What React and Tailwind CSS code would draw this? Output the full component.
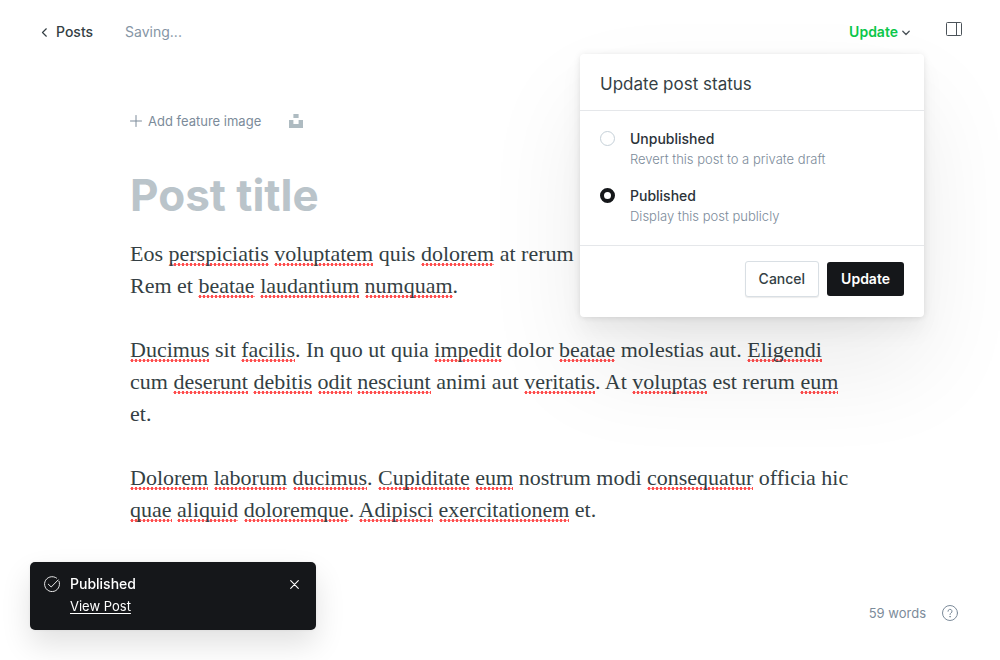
import React from "react";

const paragraphs = [
  ["Eos *perspiciatis *voluptatem quis *dolorem at rerum", "Rem et *beatae *laudantium *numquam."],
  [
    "*Ducimus sit *facilis. In quo ut quia *impedit dolor *beatae molestias aut. *Eligendi cum *deserunt *debitis *odit *nesciunt animi aut *veritatis. At *voluptas est rerum *eum et.",
  ],
  [
    "*Dolorem *laborum *ducimus. *Cupiditate *eum nostrum modi *consequatur officia hic *quae *aliquid *doloremque. *Adipisci *exercitationem et.",
  ],
];

// A leading asterisk marks a word the spell checker has flagged.
function SpellCheckedLine({ text }) {
  return text.split(" ").map((token, i) => {
    const flagged = token.startsWith("*");
    const word = flagged ? token.slice(1) : token;
    const stop = flagged && word.endsWith(".");
    return (
      <React.Fragment key={i}>
        {i > 0 && " "}
        {flagged ? (
          <span className="bg-[radial-gradient(circle,#ff4d4d_1.3px,transparent_1.8px)] bg-[length:4px_3px] bg-bottom-left bg-repeat-x">
            {stop ? word.slice(0, -1) : word}
          </span>
        ) : (
          word
        )}
        {stop && "."}
      </React.Fragment>
    );
  });
}

function StatusOption({ id, title, hint, defaultChecked }) {
  return (
    <div className="flex items-start gap-[15px]">
      <input
        type="radio"
        name="status"
        id={id}
        defaultChecked={defaultChecked}
        className="mt-[2px] size-[15px] shrink-0 appearance-none rounded-full border border-[#c5d0d8] bg-white checked:border-[4px] checked:border-[#15171a]"
      />
      <label htmlFor={id} className="flex flex-col">
        <span className="text-sm leading-5 font-medium text-[#2b3238]">{title}</span>
        <span className="text-[13px] leading-5 font-light text-[#7c8b9a]">{hint}</span>
      </label>
    </div>
  );
}

function StatusMenu() {
  return (
    <form
      onSubmit={(e) => e.preventDefault()}
      className="absolute top-[54px] right-[76px] z-10 w-[344px] rounded bg-white shadow-[0_0_7px_rgba(0,0,0,0.08),0_2px_4px_rgba(0,0,0,0.03),0_14px_22px_rgba(0,0,0,0.05),0_50px_100px_rgba(0,0,0,0.08)]"
    >
      <h2 className="border-b border-[#e5e7ea] px-5 pt-[18px] pb-[14px] text-[17px] leading-6 font-normal text-[#343f44]">
        Update post status
      </h2>
      <div className="flex flex-col gap-[17px] border-b border-[#e5e7ea] px-5 pt-[18px] pb-[19px]">
        <StatusOption id="unpublished" title="Unpublished" hint="Revert this post to a private draft" />
        <StatusOption id="published" title="Published" hint="Display this post publicly" defaultChecked />
      </div>
      <div className="flex items-center justify-end gap-2 px-5 pt-[15px] pb-5">
        <button
          type="button"
          className="h-9 rounded-[3px] border border-[#d9dfe4] bg-white px-[13px] text-sm font-medium text-[#343f44] shadow-[0_1px_1px_rgba(0,0,0,0.08)]"
        >
          Cancel
        </button>
        <button type="submit" className="h-[34px] rounded-[3px] bg-[#15171a] px-[14px] text-sm font-semibold text-white">
          Update
        </button>
      </div>
    </form>
  );
}

function Toast() {
  return (
    <aside
      role="status"
      className="fixed bottom-[30px] left-[30px] z-20 flex w-[286px] items-start gap-[10px] rounded-[5px] bg-[#15171a] px-[14px] pt-3 pb-[14px] text-white shadow-[0_0_4px_rgba(0,0,0,0.06),0_14px_30px_rgba(0,0,0,0.12)]"
    >
      <svg viewBox="0 0 16 16" className="mt-[2px] size-4 shrink-0" fill="none" stroke="currentColor" strokeLinecap="round" strokeLinejoin="round" aria-hidden="true">
        <path d="M15 5.2A7.5 7.5 0 1 1 12.6 2.1" strokeWidth="0.9" />
        <path d="M4.3 8.2 7.2 11 14.2 3.9" strokeWidth="0.9" />
      </svg>
      <div className="flex grow flex-col items-start">
        <span className="text-sm leading-5 font-medium">Published</span>
        <a href="#post" className="mt-[2px] text-[13px] leading-5 underline underline-offset-2">
          View Post
        </a>
      </div>
      <button type="button" aria-label="Close" className="mt-[6px] mr-[3px]">
        <svg viewBox="0 0 9 9" className="size-[9px]" stroke="currentColor" strokeWidth="1.1" strokeLinecap="round" aria-hidden="true">
          <path d="M.7.7l7.6 7.6M8.3.7.7 8.3" />
        </svg>
      </button>
    </aside>
  );
}

export default function App() {
  return (
    <div className="relative flex min-h-screen flex-col bg-white font-['Inter',sans-serif] text-[#343f44]">
      <header className="flex h-16 items-center pr-[38px] pl-[41px]">
        <a href="#posts" className="flex items-center gap-2 text-sm leading-5 font-medium">
          <svg viewBox="0 0 7 9" className="h-[9px] w-[7px]" fill="none" stroke="currentColor" strokeWidth="1.2" strokeLinecap="round" strokeLinejoin="round" aria-hidden="true">
            <path d="M5.3.8 1.5 4.5l3.8 3.7" />
          </svg>
          Posts
        </a>
        <span className="ml-8 text-sm leading-5 text-[#8595a5]">Saving...</span>
        <button type="button" aria-expanded="true" className="ml-auto flex items-center gap-1 text-sm leading-5 font-semibold text-[#0cc84a]">
          Update
          <svg viewBox="0 0 8 6" className="mt-[2px] h-[6px] w-2 text-[#4b5359]" fill="none" stroke="currentColor" strokeWidth="1.3" strokeLinecap="round" strokeLinejoin="round" aria-hidden="true">
            <path d="M.8 1.2 4 4.5l3.2-3.3" />
          </svg>
        </button>
        <button type="button" aria-label="Settings" className="mb-[6px] ml-9">
          <svg viewBox="0 0 16 14" className="h-[14px] w-4 text-[#4b5359]" fill="none" stroke="currentColor" aria-hidden="true">
            <rect x=".5" y=".5" width="15" height="13" rx="1" />
            <path d="M10.5.5v13" />
          </svg>
        </button>
      </header>

      <StatusMenu />

      <main className="mx-auto w-full max-w-[740px] pt-[47px] pb-10">
        <div className="flex items-center gap-7">
          <button type="button" className="flex items-center gap-[6px] text-[13px] leading-5 text-[#7c8b9a]">
            <svg viewBox="0 0 12 12" className="size-3" stroke="currentColor" strokeWidth="1" strokeLinecap="round" aria-hidden="true">
              <path d="M6 .5v11M.5 6h11" />
            </svg>
            Add feature image
          </button>
          <button type="button" aria-label="Choose from Unsplash">
            <svg viewBox="0 0 14 14" className="size-[14px]" fill="#aebbc1" aria-hidden="true">
              <path d="M4.4 0h5.2v4H4.4zM0 6.1h4.4v4h5.2v-4H14V14H0z" />
            </svg>
          </button>
        </div>
        <input
          type="text"
          aria-label="Post title"
          placeholder="Post title"
          className="mt-[34px] block h-[60px] w-full text-[44px] font-bold outline-none placeholder:text-[#bac4ca]"
        />
        <article className="mt-[13px] flex max-w-[730px] flex-col gap-8 font-['Georgia','Liberation_Serif',serif] text-[22px] leading-8">
          {paragraphs.map((lines, i) => (
            <p key={i}>
              {lines.map((line, j) => (
                <React.Fragment key={j}>
                  {j > 0 && <br />}
                  <SpellCheckedLine text={line} />
                </React.Fragment>
              ))}
            </p>
          ))}
        </article>
      </main>

      <footer className="mt-auto flex items-center justify-end gap-4 pr-[42px] pb-[37px] text-[13px] leading-5 text-[#7c8b9a]">
        <span>59 words</span>
        <a href="#help" aria-label="Help">
          <svg viewBox="0 0 16 16" className="size-4" fill="none" stroke="currentColor" strokeLinecap="round" strokeLinejoin="round" aria-hidden="true">
            <circle cx="8" cy="8" r="7.5" />
            <path d="M6 6.3a2 2 0 1 1 2.9 1.8c-.6.3-.9.7-.9 1.4" />
            <circle cx="8" cy="11.7" r=".3" />
          </svg>
        </a>
      </footer>

      <Toast />
    </div>
  );
}
